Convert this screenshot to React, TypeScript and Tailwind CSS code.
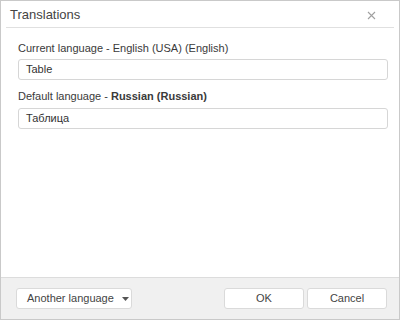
import React from 'react';

const font = { fontFamily: '"Liberation Sans", Arial, sans-serif' };

const Field: React.FC<{ value: string }> = ({ value }) => (
  <div className="h-[21px] rounded-[3px] border border-[#d6d6d6] bg-white px-[7px] flex items-center text-[11px] text-[#333]">
    {value}
  </div>
);

const Button: React.FC<{ className?: string; children: React.ReactNode }> = ({ className = '', children }) => (
  <div
    className={`h-[21px] rounded-[3px] border border-[#dadada] bg-white flex items-center text-[11px] text-[#444] ${className}`}
  >
    {children}
  </div>
);

export default function App() {
  return (
    <div style={font} className="w-[400px] h-[320px] border border-[#c9c9c9] bg-white flex flex-col">
      {/* Header */}
      <div className="mx-[5px] h-[27px] border-b border-[#e0e0e0] flex items-center justify-between pl-[4px] pr-[18px]">
        <span className="text-[13px] text-[#444] pt-[2px]">Translations</span>
        <svg width="9" height="9" viewBox="0 0 9 9" className="mt-[3px]">
          <path d="M1 1 L8 8 M8 1 L1 8" stroke="#a0a0a0" strokeWidth="1.1" />
        </svg>
      </div>

      {/* Body */}
      <div className="flex-1 pl-[17px] pr-[11px] pt-[13px] text-[11px] text-[#3a3a3a]">
        <div className="leading-[14px] mb-[4px]">Current language - English (USA) (English)</div>
        <Field value="Table" />
        <div className="leading-[14px] mt-[9px] mb-[5px]">
          Default language - <span className="font-bold">Russian (Russian)</span>
        </div>
        <Field value="Таблица" />
      </div>

      {/* Footer */}
      <div className="h-[42px] border-t border-[#dcdcdc] bg-[#f0f0f0] flex items-start justify-between pt-[10px] pl-[15px] pr-[12px]">
        <Button className="w-[116px] gap-[8px] pl-[10px]">
          <span>Another language</span>
          <svg width="7" height="4" viewBox="0 0 7 4">
            <path d="M0 0 L7 0 L3.5 4 Z" fill="#555" />
          </svg>
        </Button>
        <div className="flex gap-[3px]">
          <Button className="w-[80px] justify-center">OK</Button>
          <Button className="w-[80px] justify-center">Cancel</Button>
        </div>
      </div>
    </div>
  );
}
